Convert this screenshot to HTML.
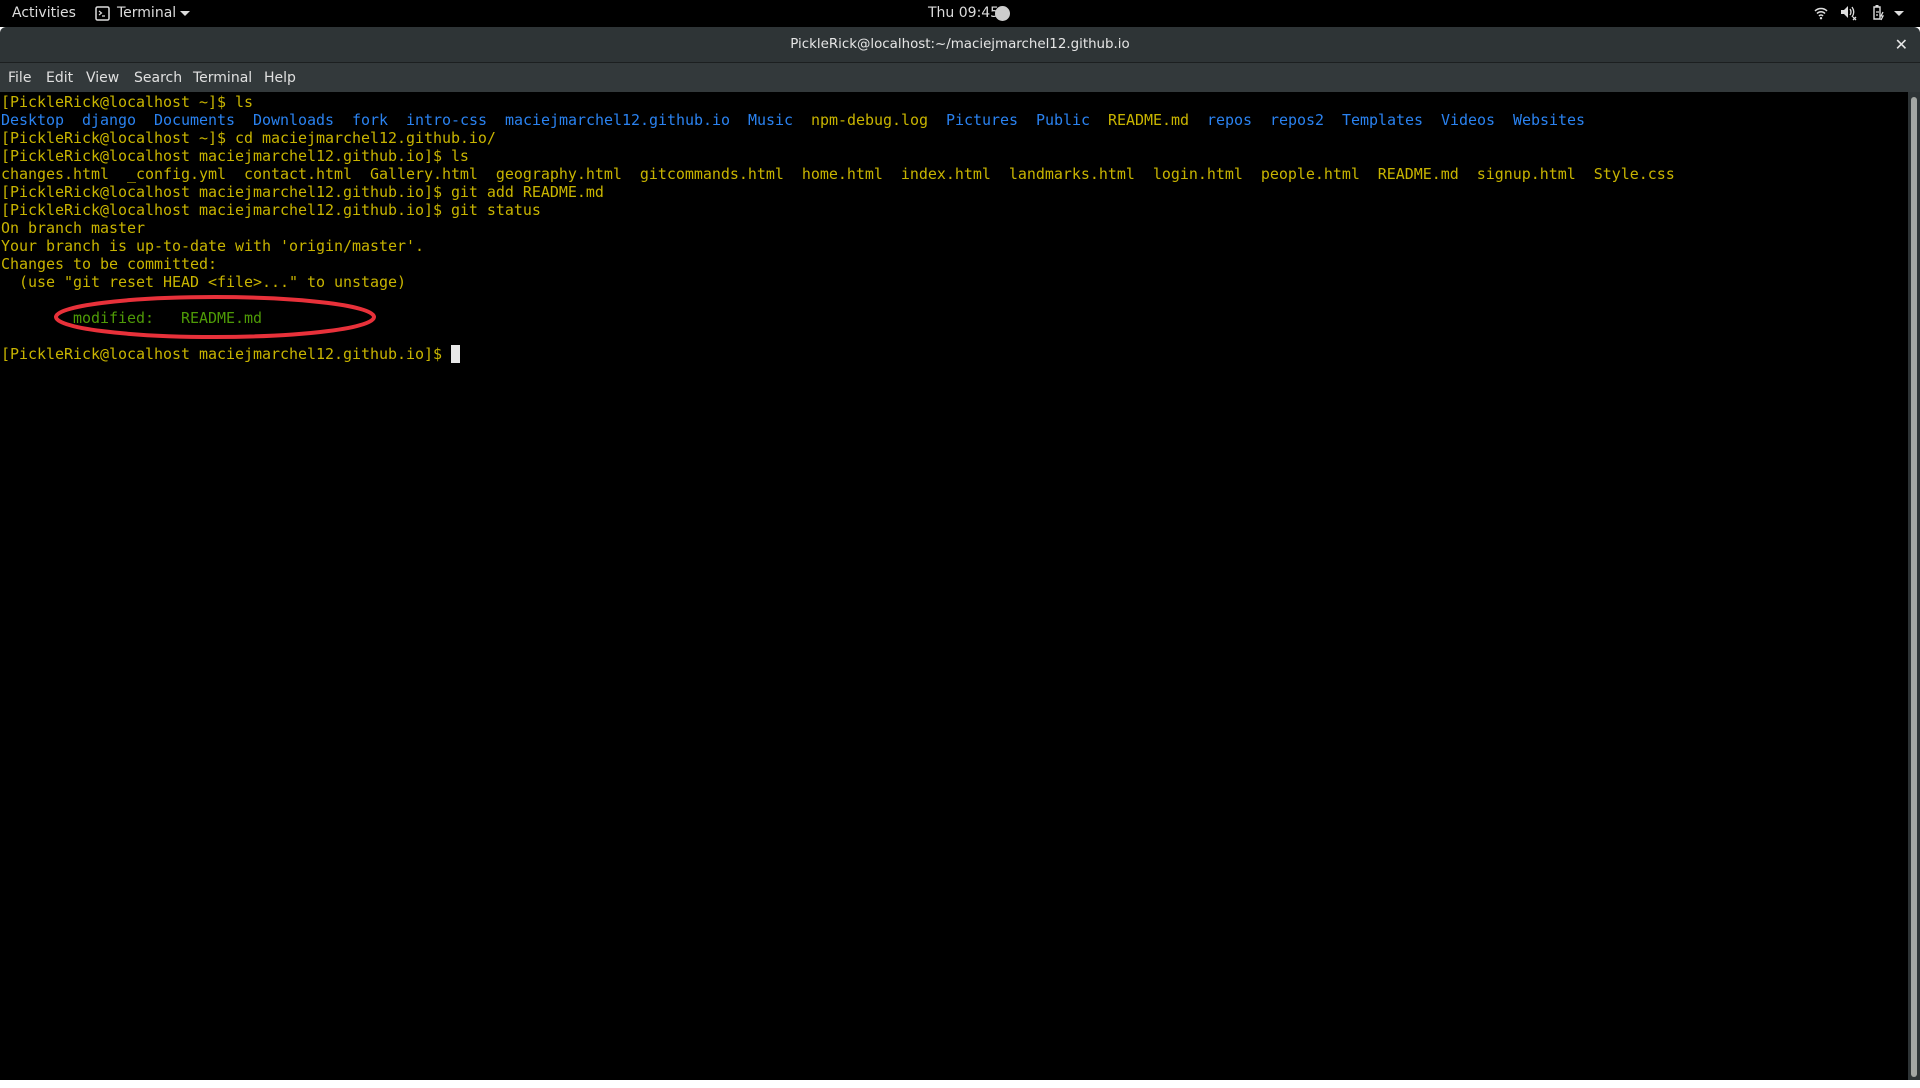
<!DOCTYPE html>
<html><head><meta charset="utf-8"><style>
*{margin:0;padding:0;box-sizing:border-box}
body{width:1920px;height:1088px;background:#fff;position:relative;overflow:hidden;font-family:"DejaVu Sans","Liberation Sans",sans-serif}
#top{position:absolute;left:0;top:0;width:1920px;height:27px;background:#000;color:#ddd;font-size:14px}
#title{position:absolute;left:0;top:27px;width:1920px;height:36px;background:#2e3436;border-radius:6px 6px 0 0;border-bottom:1px solid #1c1f20;color:#e6e6e6;font-size:13.4px;text-align:center;line-height:36px}
#menu{position:absolute;left:0;top:63px;width:1920px;height:29px;background:#33393b;color:#e0e0e0;font-size:14px}
#menu span{position:absolute;top:7px}
#term{position:absolute;left:0;top:92px;width:1908px;height:988px;background:#000}
pre{position:absolute;left:1px;top:93px;font-family:"DejaVu Sans Mono","Liberation Mono",monospace;font-size:15px;line-height:18px;letter-spacing:-0.032px;color:#c8b400}
.b{color:#2a82f0}.g{color:#4e9a06}
#sb{position:absolute;left:1908px;top:92px;width:12px;height:988px;background:#2e3436}
#th{position:absolute;left:1911px;top:97px;width:6px;height:980px;background:#a3a6a3;border-radius:3px}
</style></head><body>
<div id="top">
<span style="position:absolute;left:12px;top:5px">Activities</span>
<svg style="position:absolute;left:95px;top:6px" width="15" height="15" viewBox="0 0 15 15"><rect x="1" y="1" width="13" height="13" rx="1.5" fill="none" stroke="#ddd" stroke-width="1.5"/><path d="M4 5l2.5 2L4 9M7 10h3" stroke="#ddd" stroke-width="1.2" fill="none"/></svg>
<span style="position:absolute;left:117px;top:5px">Terminal</span>
<svg style="position:absolute;left:180px;top:11px" width="10" height="6"><path d="M0 0h10L5 5z" fill="#ddd"/></svg>
<span style="position:absolute;left:928px;top:5px">Thu 09:45</span>
<div style="position:absolute;left:995px;top:6px;width:15px;height:15px;border-radius:50%;background:#ccc"></div>
<svg style="position:absolute;left:1814px;top:6px" width="14" height="14" viewBox="0 0 14 14"><path d="M1 5a8.5 8.5 0 0 1 12 0M3 7.5a5.5 5.5 0 0 1 8 0M5 10a2.5 2.5 0 0 1 4 0" stroke="#ddd" stroke-width="1.5" fill="none"/><circle cx="7" cy="12.2" r="1.2" fill="#ddd"/></svg>
<svg style="position:absolute;left:1840px;top:5px" width="18" height="16" viewBox="0 0 18 16"><path d="M1 5h3l4-4v12l-4-4H1z" fill="#ddd"/><path d="M10 4q2 3 0 6M12 2q3.5 5 0 10" stroke="#ddd" stroke-width="1.3" fill="none"/><path d="M13 12l3 3M16 12l-3 3" stroke="#ddd" stroke-width="1.3"/></svg>
<svg style="position:absolute;left:1870px;top:4px" width="16" height="18" viewBox="0 0 16 18"><path d="M4 3h6v12H4z" stroke="#ddd" stroke-width="1.4" fill="none"/><rect x="5.5" y="1" width="3" height="2" fill="#ddd"/><path d="M6 8h3M6 11h2M13 8l-2 4h2l-2 4" stroke="#ddd" stroke-width="1.3" fill="none"/></svg>
<svg style="position:absolute;left:1894px;top:11px" width="10" height="6"><path d="M0 0h10L5 5z" fill="#ddd"/></svg>
</div>
<div id="title">PickleRick@localhost:~/maciejmarchel12.github.io<span style="position:absolute;right:12px;top:0;font-size:16px;font-weight:bold">✕</span></div>
<div id="menu"><span style="left:8px">File</span><span style="left:46px">Edit</span><span style="left:86px">View</span><span style="left:134px">Search</span><span style="left:193px">Terminal</span><span style="left:264px">Help</span></div>
<div id="term"></div>
<pre>[PickleRick@localhost ~]$ ls
<span class="b">Desktop</span>  <span class="b">django</span>  <span class="b">Documents</span>  <span class="b">Downloads</span>  <span class="b">fork</span>  <span class="b">intro-css</span>  <span class="b">maciejmarchel12.github.io</span>  <span class="b">Music</span>  npm-debug.log  <span class="b">Pictures</span>  <span class="b">Public</span>  README.md  <span class="b">repos</span>  <span class="b">repos2</span>  <span class="b">Templates</span>  <span class="b">Videos</span>  <span class="b">Websites</span>
[PickleRick@localhost ~]$ cd maciejmarchel12.github.io/
[PickleRick@localhost maciejmarchel12.github.io]$ ls
changes.html  _config.yml  contact.html  Gallery.html  geography.html  gitcommands.html  home.html  index.html  landmarks.html  login.html  people.html  README.md  signup.html  Style.css
[PickleRick@localhost maciejmarchel12.github.io]$ git add README.md
[PickleRick@localhost maciejmarchel12.github.io]$ git status
On branch master
Your branch is up-to-date with 'origin/master'.
Changes to be committed:
  (use "git reset HEAD &lt;file&gt;..." to unstage)

        <span class="g">modified:   README.md</span>

[PickleRick@localhost maciejmarchel12.github.io]$ <span style="background:#e8e8e8"> </span></pre>
<svg style="position:absolute;left:0;top:0" width="1920" height="1088"><ellipse cx="215" cy="317" rx="159" ry="20" fill="none" stroke="#e8313a" stroke-width="4"/></svg>
<div id="sb"></div><div id="th"></div>
</body></html>
